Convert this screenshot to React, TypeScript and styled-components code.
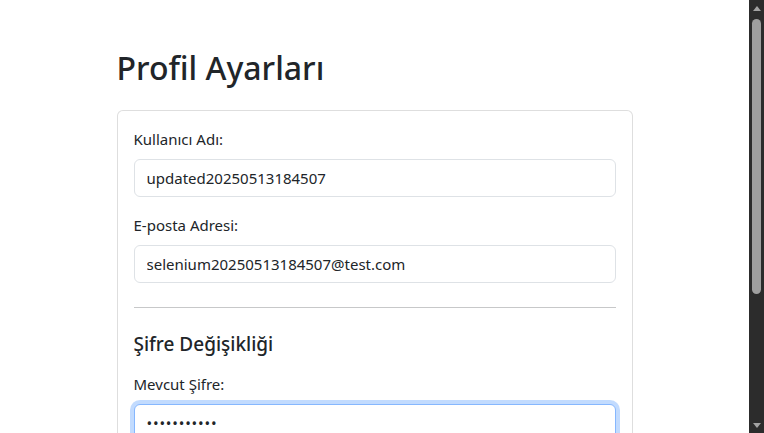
import { useEffect, useRef } from 'react'
import styled, { createGlobalStyle, css } from 'styled-components'

const GlobalStyle = createGlobalStyle`
  html, body {
    margin: 0;
    padding: 0;
    background: #fff;
  }
  body {
    font-family: "Noto Sans", "Liberation Sans", sans-serif;
    font-size: 15px;
    line-height: 24px;
    color: #212529;
  }
  *, *::before, *::after {
    box-sizing: border-box;
  }
`

interface IField {
  id: string
  label: string
  type: string
  value: string
  focused?: boolean
}

const accountFields: IField[] = [
  { id: 'username', label: 'Kullanıcı Adı:', type: 'text', value: 'updated20250513184507' },
  { id: 'email', label: 'E-posta Adresi:', type: 'email', value: 'selenium20250513184507@test.com' },
]

const passwordFields: IField[] = [
  { id: 'current', label: 'Mevcut Şifre:', type: 'password', value: 'Password123', focused: true },
  { id: 'new', label: 'Yeni Şifre:', type: 'password', value: '' },
]

function App() {
  const focusRef = useRef<HTMLInputElement>(null)

  useEffect(() => {
    // focus without scrolling the page, the caret sits at the end
    const el = focusRef.current
    if (el) {
      el.focus({ preventScroll: true })
      el.setSelectionRange(el.value.length, el.value.length)
    }
  }, [])

  const renderField = (f: IField, last?: boolean) => (
    <Field key={f.id} $last={last}>
      <Label htmlFor={f.id}>{f.label}</Label>
      <Input
        id={f.id}
        type={f.type}
        defaultValue={f.value}
        ref={f.focused ? focusRef : undefined}
        $focused={f.focused}
      />
    </Field>
  )

  return (
    <Shell>
      <GlobalStyle />
      <Page>
        <Container>
          <Title>Profil Ayarları</Title>
          <Card>
            <form onSubmit={e => e.preventDefault()}>
              {accountFields.map((f, i) => renderField(f, i === accountFields.length - 1))}
              <Divider />
              <SectionTitle>Şifre Değişikliği</SectionTitle>
              {passwordFields.map(f => renderField(f))}
              <SaveButton type="submit">Güncelle</SaveButton>
            </form>
          </Card>
        </Container>
      </Page>
      <ScrollRail>
        <Arrow $dir="up" />
        <Thumb />
        <Arrow $dir="down" />
      </ScrollRail>
    </Shell>
  )
}

const Shell = styled.div`
  display: flex;
  height: 100vh;
  overflow: hidden;
`

const Page = styled.main`
  flex: 1;
  min-width: 0;
  overflow: hidden;
`

const Container = styled.div`
  max-width: 540px;
  margin: 48px auto 0;
  padding: 0 12px;
`

const Title = styled.h1`
  font-size: 32px;
  font-weight: 500;
  line-height: 40px;
  margin: 0 0 22px;
`

const Card = styled.div`
  border: 1px solid rgba(0, 0, 0, 0.13);
  border-radius: 6px;
  padding: 16px;
  background: #fff;
`

const Field = styled.div<{ $last?: boolean }>`
  margin-bottom: ${p => (p.$last ? '0' : '16px')};
`

const Label = styled.label`
  display: block;
  margin-bottom: 8px;
`

const focusRing = css`
  border-color: #86b7fe;
  outline: 0;
  box-shadow: 0 0 0 4px rgba(13, 110, 253, 0.25);
`

const Input = styled.input<{ $focused?: boolean }>`
  display: block;
  width: 100%;
  height: 38px;
  padding: 6px 12px;
  font: inherit;
  font-size: 15px;
  line-height: 24px;
  color: #212529;
  background: #fff;
  border: 1px solid #dee2e6;
  border-radius: 6px;
  &[type='password'] {
    letter-spacing: 0.8px;
  }
  &:focus {
    ${focusRing}
  }
  ${p => p.$focused && focusRing}
`

const Divider = styled.hr`
  margin: 24px 0;
  border: 0;
  border-top: 1px solid #212529;
  opacity: 0.25;
`

const SectionTitle = styled.h5`
  font-size: 19px;
  font-weight: 500;
  line-height: 24px;
  margin: 0 0 16px;
`

const SaveButton = styled.button`
  font: inherit;
  padding: 6px 12px;
  color: #fff;
  background: #0d6efd;
  border: 1px solid #0d6efd;
  border-radius: 6px;
`

const ScrollRail = styled.div`
  width: 15px;
  flex: 0 0 15px;
  background: #2c2c2c;
  display: flex;
  flex-direction: column;
  align-items: center;
`

const Arrow = styled.div<{ $dir: 'up' | 'down' }>`
  width: 0;
  height: 0;
  border-left: 4px solid transparent;
  border-right: 4px solid transparent;
  ${p =>
    p.$dir === 'up'
      ? css`
          margin: 6px 0 8px;
          border-bottom: 5px solid #a3a3a3;
        `
      : css`
          margin: auto 0 5px;
          border-top: 5px solid #a3a3a3;
        `}
`

const Thumb = styled.div`
  width: 9px;
  height: 275px;
  border-radius: 5px;
  background: #9f9f9f;
`

export default App
